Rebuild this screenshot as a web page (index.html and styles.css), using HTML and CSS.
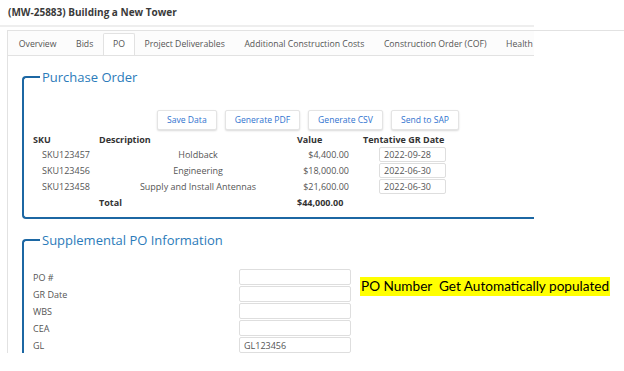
FILE: index.html
```html
<!DOCTYPE html>
<html>
  <head>
    <link rel="stylesheet" href="styles.css">
  </head>
  <body>
    <header class="page-head">
      <h1 class="page-title">(MW-25883) Building a New Tower</h1>
    </header>
    <main class="panel">
      <nav class="tabs">
        <a class="tab">Overview</a>
        <a class="tab">Bids</a>
        <a class="tab active">PO</a>
        <a class="tab">Project Deliverables</a>
        <a class="tab">Additional Construction Costs</a>
        <a class="tab">Construction Order (COF)</a>
        <a class="tab">Health</a>
      </nav>
      <div class="tab-body">
        <section class="group">
          <h2 class="group-title">Purchase Order</h2>
          <div class="group-body">
            <div class="actions">
              <button class="btn">Save Data</button>
              <button class="btn">Generate PDF</button>
              <button class="btn">Generate CSV</button>
              <button class="btn">Send to SAP</button>
            </div>
            <table class="po-table">
              <thead>
                <tr>
                  <th class="col-sku">SKU</th>
                  <th class="col-desc">Description</th>
                  <th class="col-value">Value</th>
                  <th class="col-date">Tentative GR Date</th>
                </tr>
              </thead>
              <tbody>
                <tr>
                  <td class="sku">SKU123457</td>
                  <td class="desc">Holdback</td>
                  <td class="value">$4,400.00</td>
                  <td class="date"><input class="field date-field" value="2022-09-28"></td>
                </tr>
                <tr>
                  <td class="sku">SKU123456</td>
                  <td class="desc">Engineering</td>
                  <td class="value">$18,000.00</td>
                  <td class="date"><input class="field date-field" value="2022-06-30"></td>
                </tr>
                <tr>
                  <td class="sku">SKU123458</td>
                  <td class="desc">Supply and Install Antennas</td>
                  <td class="value">$21,600.00</td>
                  <td class="date"><input class="field date-field" value="2022-06-30"></td>
                </tr>
                <tr class="total-row">
                  <td></td>
                  <td>Total</td>
                  <td>$44,000.00</td>
                  <td></td>
                </tr>
              </tbody>
            </table>
          </div>
        </section>

        <section class="group">
          <h2 class="group-title">Supplemental PO Information</h2>
          <div class="group-body sup-body">
            <div class="sup-form">
              <label class="sup-label">PO #</label>
              <input class="field sup-field">
              <label class="sup-label">GR Date</label>
              <input class="field sup-field">
              <label class="sup-label">WBS</label>
              <input class="field sup-field">
              <label class="sup-label">CEA</label>
              <input class="field sup-field">
              <label class="sup-label">GL</label>
              <input class="field sup-field" value="GL123456">
              <span class="note">PO Number&nbsp; Get Automatically populated</span>
            </div>
          </div>
        </section>
      </div>
    </main>
  </body>
</html>
```

FILE: styles.css
```css
* {
  box-sizing: border-box;
}

body {
  margin: 0;
  font-family: "Open Sans", sans-serif;
  color: #555;
  background: #fff;
}

.page-head {
  width: 534px;
  height: 27px;
  border-bottom: 2px solid #eeeeee;
}

.page-title {
  margin: 0;
  padding-left: 8px;
  font-size: 10px;
  font-weight: 700;
  line-height: 25px;
  color: #3a3a3a;
}

/* screenshot is cut just under the GL field; wide enough for the note */
.panel {
  width: 617px;
  height: 323px;
  margin: 3px 0 0 7px;
  border-top: 1px solid #e2e2e2;
  border-left: 1px solid #e2e2e2;
  overflow: hidden;
}

.tabs {
  display: flex;
  align-items: flex-end;
  width: 526px;
  height: 25px;
  padding-left: 1px;
  border-bottom: 1px solid #e2e2e2;
  background: #fcfcfc;
  overflow: hidden;
}

.tab {
  flex-shrink: 0;
  white-space: nowrap;
  height: 23px;
  padding: 0 8.8px;
  margin-bottom: -1px;
  line-height: 21px;
  font-size: 8.7px;
  color: #555;
  border: 1px solid transparent;
  border-bottom: 0;
  border-radius: 2px 2px 0 0;
}

.tab.active {
  background: #fff;
  border-color: #e2e2e2;
}

.tab-body {
  width: 526px;
  padding: 12px 0 0 14px;
}

.group + .group {
  margin-top: 12px;
}

.group-title {
  display: flex;
  margin: 0;
  font-size: 13px;
  font-weight: 400;
  line-height: 18px;
  color: #2b7bba;
}

.group-title::before {
  content: "";
  width: 16px;
  margin-top: 8px;
  margin-right: 2px;
  border-top: 2px solid #1c67a3;
  border-left: 2px solid #1c67a3;
  border-top-left-radius: 4px;
}

.group-body {
  padding: 24px 0 7px 9px;
  border-left: 2px solid #1c67a3;
  border-bottom: 2px solid #1c67a3;
  border-bottom-left-radius: 4px;
}

.sup-body {
  padding-top: 20px;
}

.actions {
  display: flex;
  gap: 8px;
  padding-left: 124px;
  margin-bottom: 2px;
}

.btn {
  height: 20px;
  padding: 0 9px;
  font-family: "Open Sans", sans-serif;
  font-size: 8.6px;
  color: #2f73cf;
  background: #fff;
  border: 1px solid #e4e4e4;
  border-radius: 2px;
  box-shadow: 0 1px 2px rgba(0, 0, 0, 0.15);
}

.po-table {
  border-collapse: collapse;
  font-size: 9px;
  color: #555;
}

.po-table th {
  height: 14px;
  padding: 0;
  text-align: left;
  font-weight: 700;
  color: #333;
}

.po-table td {
  height: 16px;
  padding: 0;
}

.col-sku { width: 66px; }
.col-desc { width: 198px; }
.col-value { width: 66px; }
.col-date { width: 90px; }

.sku,
.desc {
  text-align: center;
}

.po-table .value {
  text-align: right;
  padding-right: 14px;
}

.po-table .date {
  padding-left: 16px;
}

.total-row td {
  font-weight: 700;
  color: #333;
}

.field {
  display: block;
  padding: 0 4px;
  font-family: "Open Sans", sans-serif;
  font-size: 9px;
  color: #555;
  background: #fff;
  border: 1px solid #dedede;
  border-radius: 2px;
  outline: none;
}

.date-field {
  width: 67px;
  height: 15px;
}

.sup-form {
  display: grid;
  grid-template-columns: 206px 112px auto;
  grid-auto-rows: 17px;
  margin-bottom: 10px;
}

.sup-label {
  grid-column: 1;
  font-size: 9px;
  line-height: 17px;
  color: #555;
}

.sup-field {
  grid-column: 2;
  width: 112px;
  height: 16px;
}

.note {
  grid-column: 3;
  grid-row: 1 / span 2;
  align-self: center;
  justify-self: start;
  margin-left: 9px;
  padding: 0 1px;
  font-family: Lato, sans-serif;
  font-size: 13.6px;
  line-height: 19px;
  color: #000;
  background: #ffff00;
  white-space: nowrap;
}
```
